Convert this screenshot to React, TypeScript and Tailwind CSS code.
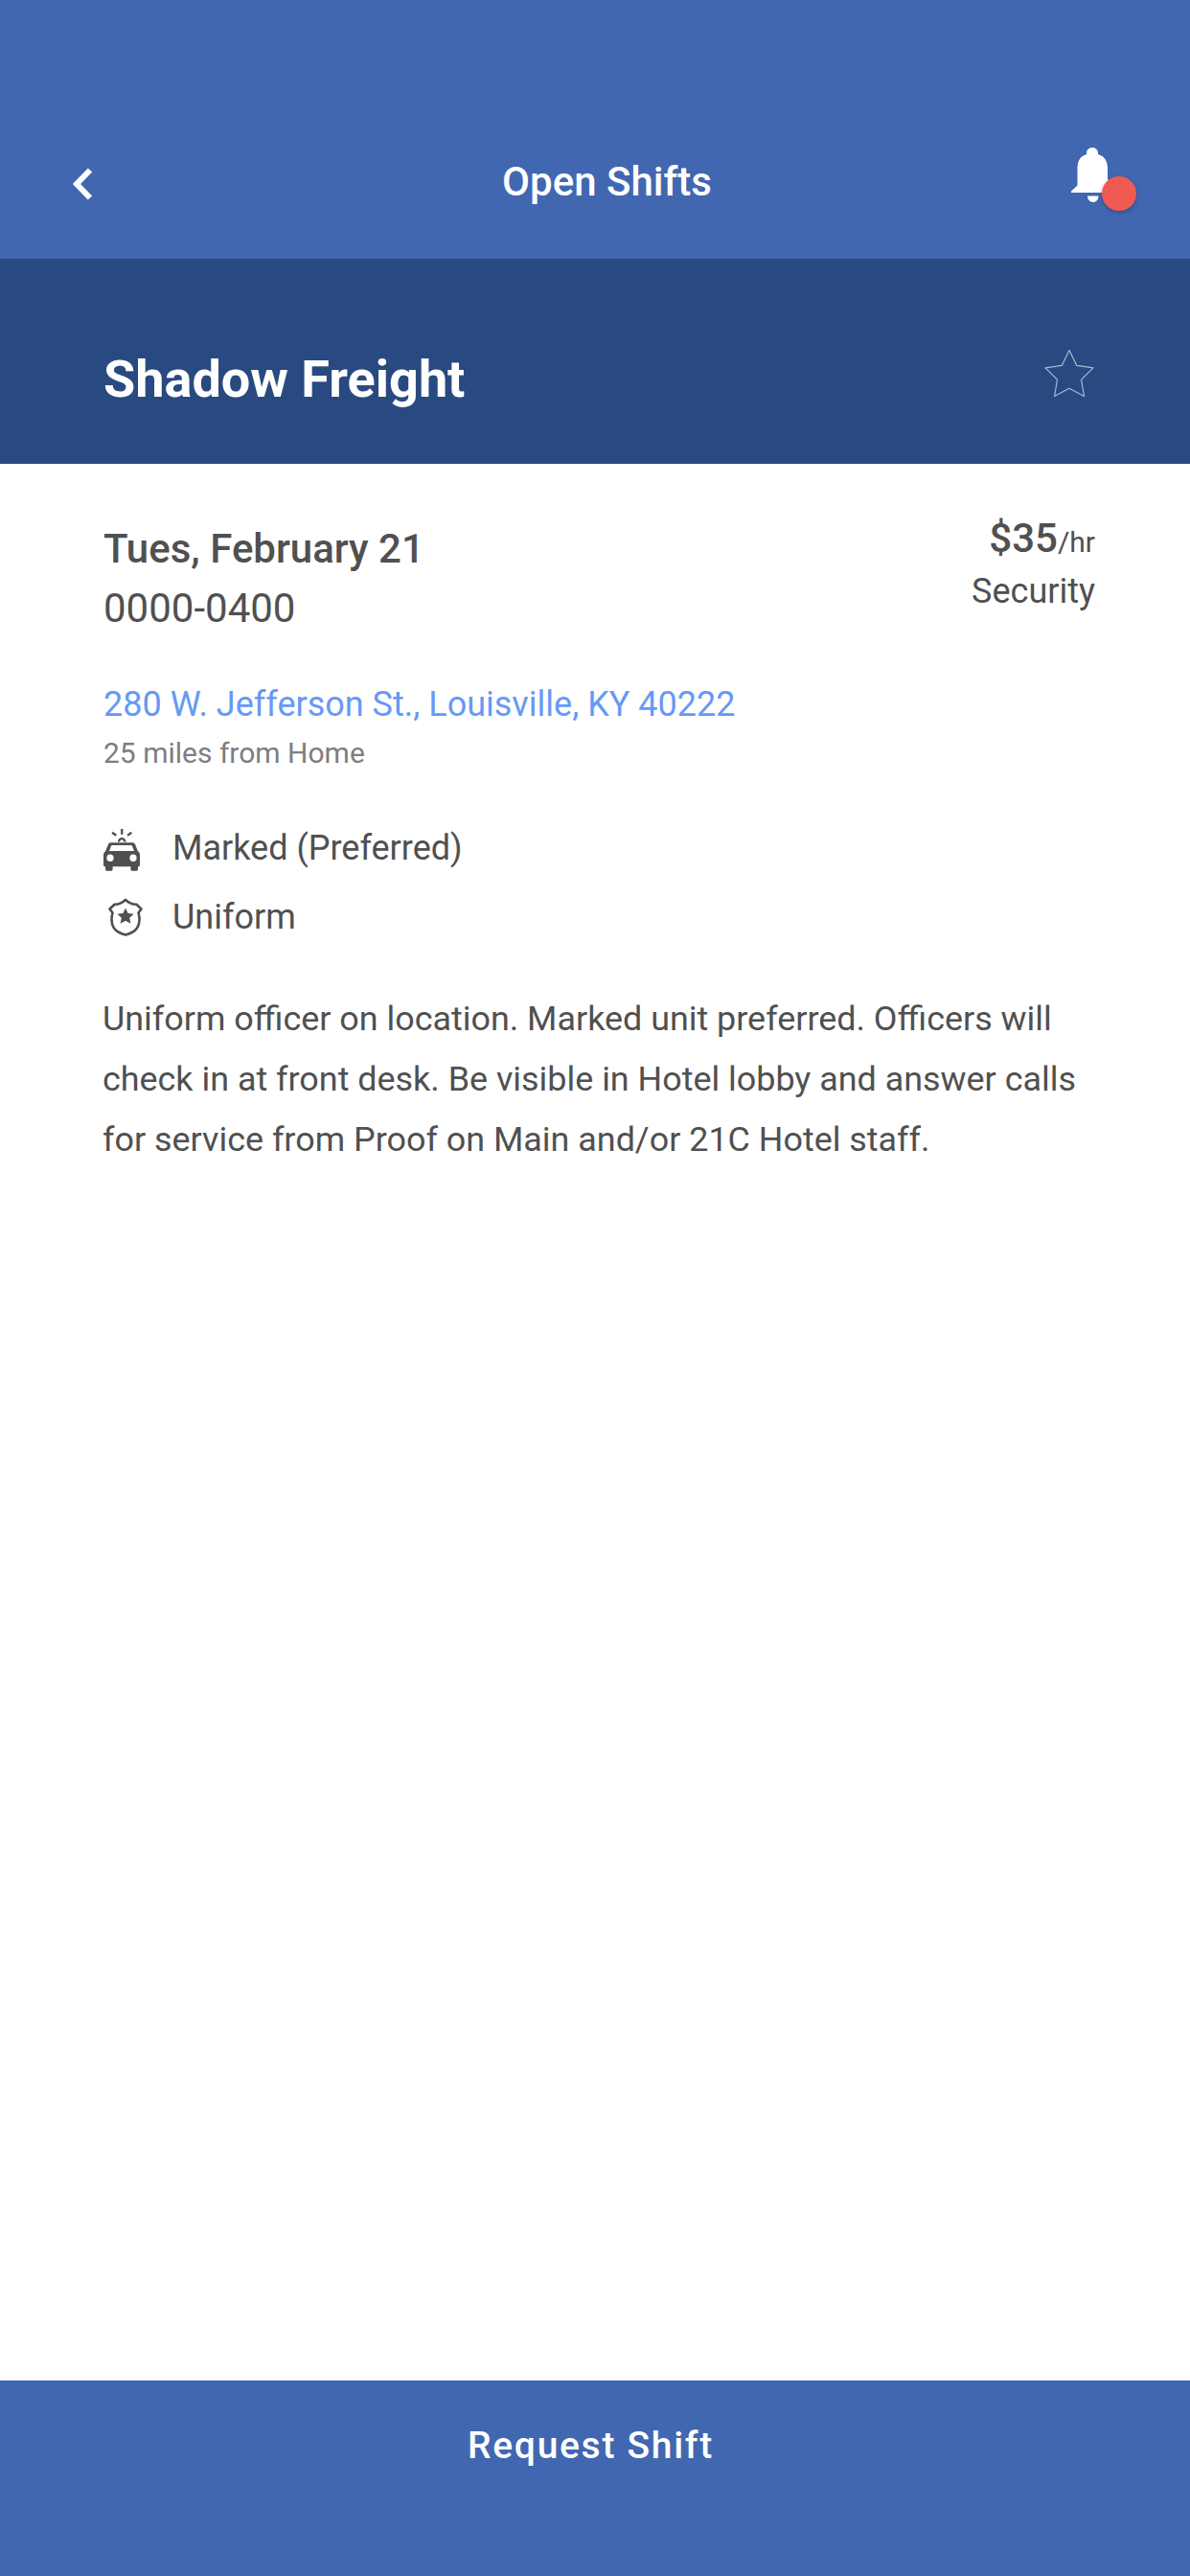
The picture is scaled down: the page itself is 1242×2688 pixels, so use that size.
const roboto = "font-['Roboto',sans-serif]";

function BellIcon() {
  return (
    <svg width="44" height="60" viewBox="0 0 44 60" fill="#ffffff">
      <path d="M22 1c-3.600 0-6 2.600-6 5.600v1.400C8.500 10.200 6.500 16 6.500 23v17.500L0 46.500v1.500h44v-8L38 34V23c0-7-2.500-12.800-10-15V6.600C28 3.600 25.600 1 22 1z" />
      <path d="M17 51.500h11.500c0 3.600-2.400 6.500-5.700 6.500S17 55.100 17 51.500z" />
    </svg>
  );
}

function StarIcon() {
  return (
    <svg width="54" height="52" viewBox="0 0 54 52" fill="none" stroke="#aab8cf" strokeWidth="1.200" strokeLinejoin="round">
      <path d="M27 1.500 34.800 17.400 52 19.900 39.500 32.100 42.500 49.500 27 41.300 11.500 49.500 14.500 32.100 2 19.900 19.200 17.400Z" />
    </svg>
  );
}

function PoliceCarIcon() {
  return (
    <svg width="38" height="44" viewBox="0 0 38 42" preserveAspectRatio="none" fill="#505050">
      <path d="M18 0h2.400v5.500H18zM9.700 2.600l4.300 3-1.300 1.900-4.300-3zM28.700 2.600l1.300 1.900-4.300 3-1.300-1.900z" />
      <path d="M14.800 13c0-2.500 2-4.400 4.400-4.400s4.400 1.900 4.400 4.400h-2.300c0-1.200-.9-2.200-2.100-2.200s-2.100 1-2.100 2.200z" />
      <path
        fillRule="evenodd"
        d="M7.500 13.500h23c1.200 0 2.100.7 2.500 1.800l3 7.200c1.200.6 2 1.800 2 3.200V36c0 .8-.6 1.400-1.400 1.400H36V40c0 1-.8 1.800-1.800 1.800h-4c-1 0-1.800-.8-1.800-1.800v-2.600H9.600V40c0 1-.8 1.800-1.800 1.800h-4C2.800 41.800 2 41 2 40v-2.600H1.400C.6 37.400 0 36.800 0 36V25.700c0-1.400.8-2.600 2-3.200l3-7.200c.4-1.100 1.300-1.800 2.500-1.800zm.9 2.800-2.400 5.600h26l-2.400-5.600zM7 25.300a3.600 3.600 0 1 0 0 7.200 3.600 3.600 0 0 0 0-7.200zm24 0a3.600 3.600 0 1 0 0 7.200 3.600 3.600 0 0 0 0-7.200z"
      />
    </svg>
  );
}

function BadgeIcon() {
  return (
    <svg width="36" height="40" viewBox="0 0 36 40" fill="none">
      <path
        d="M18 1.800C20.500 4.500 25 6.500 29.500 6.800L34.500 11.500 31.500 15.500C33 21 33 27 30 31.500 27.500 35 23 37.200 18 38.500 13 37.200 8.500 35 6 31.500 3 27 3 21 4.500 15.500L1.500 11.500 6.500 6.800C11 6.500 15.500 4.500 18 1.800Z"
        stroke="#505050"
        strokeWidth="2.600"
        strokeLinejoin="round"
      />
      <path d="M18 10.500l2.600 5.500 6 .7-4.400 4.100 1.200 6-5.400-3-5.400 3 1.200-6-4.400-4.100 6-.7z" fill="#505050" />
    </svg>
  );
}

export default function App() {
  return (
    <div className={`${roboto} flex h-[2688px] w-[1242px] flex-col bg-white text-[#505050]`}>
      {/* Nav bar */}
      <header className="grid h-[270px] grid-cols-[1fr_auto_1fr] items-end bg-[#4167b1] pr-[50px] pb-[56px] pl-[75px]">
        <svg width="22" height="34" viewBox="0 0 22 34" fill="none" className="mb-[5px]">
          <path d="M19 2.500 5 17l14 14.500" stroke="#ffffff" strokeWidth="6" />
        </svg>
        <h1 className="text-[42px] leading-[48px] font-medium text-white">Open Shifts</h1>
        <div className="relative mr-[6px] mb-[1px] h-[60px] w-[68px] justify-self-end">
          <BellIcon />
          <span className="absolute top-[31px] left-[32px] h-[36px] w-[36px] rounded-full bg-[#f15a52] shadow-[0_2px_4px_rgba(0,0,0,0.25)]" />
        </div>
      </header>

      {/* Shift title */}
      <section className="flex h-[214px] items-center justify-between bg-[#294a80] pt-[38px] pr-[99px] pl-[108px]">
        <h2 className="text-[54px] leading-[64px] font-bold text-white">Shadow Freight</h2>
        <div className="mb-[12px]">
          <StarIcon />
        </div>
      </section>

      {/* Details */}
      <main className="flex flex-1 flex-col pt-[59px] pr-[99px] pl-[108px]">
        <div className="flex justify-between">
          <div className="flex flex-col">
            <span className="text-[42px] leading-[60px] font-medium">Tues, February 21</span>
            <span className="mt-[2px] text-[42px] leading-[60px]">0000-0400</span>
          </div>
          <div className="-mt-[11px] flex flex-col items-end">
            <span className="text-[36px] leading-[60px]">
              <span className="text-[42px] font-medium">$35</span>
              <span className="text-[30px]">/hr</span>
            </span>
            <span className="-mt-[9px] text-[36px] leading-[60px]">Security</span>
          </div>
        </div>

        <a className="mt-[45px] text-[36px] leading-[50px] text-[#6699f5]">280 W. Jefferson St., Louisville, KY 40222</a>
        <span className="mt-[5px] text-[30px] leading-[42px] text-[#7e7e7e]">25 miles from Home</span>

        <div className="mt-[58px] flex flex-col gap-[32px]">
          <div className="flex h-[40px] items-center">
            <span className="mt-[4px] flex w-[72px] shrink-0">
              <PoliceCarIcon />
            </span>
            <span className="text-[36px] leading-[40px]">Marked (Preferred)</span>
          </div>
          <div className="flex h-[40px] items-center">
            <span className="flex w-[72px] shrink-0 pl-[5px]">
              <BadgeIcon />
            </span>
            <span className="text-[36px] leading-[40px]">Uniform</span>
          </div>
        </div>

        <p className="mt-[55px] -ml-[1px] w-[1030px] text-[35.9px] leading-[63px]">
          Uniform officer on location. Marked unit preferred. Officers will check in at front desk. Be visible in Hotel
          lobby and answer calls for service from Proof on Main and/or 21C Hotel staff.
        </p>
      </main>

      {/* Action */}
      <button className="flex h-[204px] w-full justify-center bg-[#4167b1] pt-[44px] pr-[9px] text-[39px] leading-[48px] font-medium tracking-[1.700px] text-white">
        Request Shift
      </button>
    </div>
  );
}
